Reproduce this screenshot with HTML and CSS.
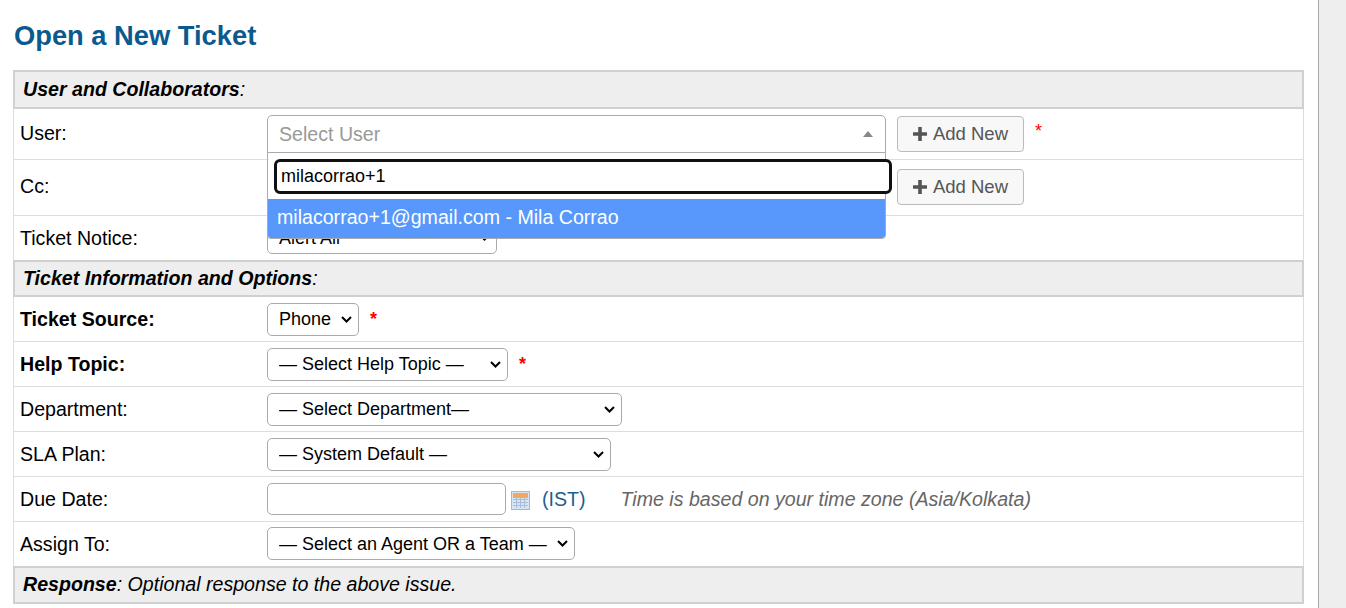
FILE: index.html
```html
<!DOCTYPE html>
<html lang="en">
<head>
<meta charset="utf-8">
<title>Open a New Ticket</title>
<link rel="stylesheet" href="styles.css">
</head>
<body>
<div class="page">
  <main class="content">
    <h1 class="title">Open a New Ticket</h1>
    <div class="form">
      <div class="section section-first"><b>User and Collaborators</b>:</div>
      <div class="row row-user">
        <label class="label">User:</label>
        <div class="field">
          <div class="combo">
            <div class="combo-box"><span class="combo-text">Select User</span><span class="combo-arrow"></span></div>
            <div class="combo-drop">
              <div class="combo-search"><input class="combo-input" type="text" value="milacorrao+1"></div>
              <div class="combo-result">milacorrao+1@gmail.com - Mila Corrao</div>
            </div>
          </div>
          <button class="add-btn" type="button"><svg class="plus" viewBox="0 0 14 14"><path d="M5.2 0h3.600v5.200H14v3.600H8.800V14H5.200V8.800H0V5.200h5.200z"/></svg>Add New</button>
          <span class="req req-user">*</span>
        </div>
      </div>
      <div class="row row-cc">
        <label class="label">Cc:</label>
        <div class="field">
          <div class="combo"></div>
          <button class="add-btn" type="button"><svg class="plus" viewBox="0 0 14 14"><path d="M5.2 0h3.600v5.200H14v3.600H8.800V14H5.200V8.800H0V5.200h5.200z"/></svg>Add New</button>
        </div>
      </div>
      <div class="row row-notice">
        <label class="label">Ticket Notice:</label>
        <div class="field"><select class="sel w-notice"><option>Alert All</option></select></div>
      </div>
      <div class="section"><b>Ticket Information and Options</b>:</div>
      <div class="row">
        <label class="label strong">Ticket Source:</label>
        <div class="field"><select class="sel w-source"><option>Phone</option></select><span class="req">*</span></div>
      </div>
      <div class="row">
        <label class="label strong">Help Topic:</label>
        <div class="field"><select class="sel w-topic"><option>— Select Help Topic —</option></select><span class="req">*</span></div>
      </div>
      <div class="row">
        <label class="label">Department:</label>
        <div class="field"><select class="sel w-dept"><option>— Select Department—</option></select></div>
      </div>
      <div class="row">
        <label class="label">SLA Plan:</label>
        <div class="field"><select class="sel w-sla"><option>— System Default —</option></select></div>
      </div>
      <div class="row">
        <label class="label">Due Date:</label>
        <div class="field">
          <input class="date" type="text">
          <svg class="cal" viewBox="0 0 19 19">
            <rect x="0.500" y="0.500" width="18" height="18" fill="#d6e4f4" stroke="#9dbbdd"/>
            <rect x="2" y="2" width="15" height="5" fill="#f3a860"/>
            <path d="M2 8.500h15M2 11.500h15M2 14.500h15M5.500 7v10M9.500 7v10M13.500 7v10" stroke="#a9bfd8" fill="none"/>
          </svg>
          <span class="tz">(IST)</span>
          <em class="note">Time is based on your time zone (Asia/Kolkata)</em>
        </div>
      </div>
      <div class="row row-assign">
        <label class="label">Assign To:</label>
        <div class="field"><select class="sel w-assign"><option>— Select an Agent OR a Team —</option></select></div>
      </div>
      <div class="section section-last"><b>Response</b>: Optional response to the above issue.</div>
    </div>
  </main>
  <aside class="side"></aside>
</div>
</body>
</html>
```
FILE: styles.css
```css
* { box-sizing: border-box; }
html, body { margin: 0; padding: 0; height: 100%; overflow: hidden; }
body { font-family: "Liberation Sans", Arial, sans-serif; font-size: 19.6px; color: #000; background: #fff; }
.page { display: flex; height: 608px; }
.content { width: 1318px; padding: 0 14px 0 13px; flex: none; }
.side { flex: 1; background: #eee; border-left: 1px solid #a8a8a8; }
.title { margin: 0; padding: 19px 0 0 1px; height: 70px; font-size: 27.3px; line-height: 33px; font-weight: bold; color: #0a5a8e; }
.form { border-left: 1px solid #ddd; border-right: 1px solid #ddd; }
.section { height: 37px; margin: 0 -1px; padding: 0 0 0 8px; background: #eee; border: 2px solid #d0d0d0; font-style: italic; line-height: 32px; }
.section-first { height: 39px; line-height: 35px; }
.section-last { height: 38px; line-height: 32px; }
.row { display: flex; align-items: center; height: 45px; border-bottom: 1px solid #ddd; }
.row:has(+ .section) { height: 44px; border-bottom: 0; }
.row-user { height: 51px; align-items: flex-start; }
.row-cc { height: 56px; align-items: flex-start; }
.label { width: 253px; flex: none; padding-left: 6px; line-height: 22px; }
.row-user .label { padding-top: 13px; }
.row-cc .label { padding-top: 15px; }
.strong { font-weight: bold; }
.field { display: flex; align-items: center; flex: 1; }
.row-user .field { padding-top: 6px; }
.row-cc .field { padding-top: 8px; }
.combo { width: 619px; position: relative; flex: none; height: 37px; }
.combo-box { display: flex; align-items: center; height: 38px; padding: 0 12px 0 11px; background: #fff; border: 1px solid #aaa; border-radius: 5px 5px 0 0; }
.combo-text { flex: 1; color: #999; }
.combo-arrow { width: 0; height: 0; border-left: 5px solid transparent; border-right: 5px solid transparent; border-bottom: 6px solid #888; }
.combo-drop { position: absolute; left: 0; right: 0; top: 37px; background: #fff; border: 1px solid #aaa; border-radius: 0 0 4px 4px; z-index: 5; }
.combo-search { padding: 6px 0 5px 6px; height: 46px; }
.combo-input { display: block; width: 618px; height: 35px; padding: 0 4px; border: 3px solid #101010; border-radius: 6px; font: 18px "Liberation Sans", Arial, sans-serif; color: #000; outline: 0; background: #fff; }
.combo-result { height: 39px; padding-left: 9px; line-height: 37px; background: #5897fb; color: #fff; border-radius: 0 0 3px 3px; }
.add-btn { display: flex; align-items: center; justify-content: center; width: 127px; height: 36px; margin-left: 11px; padding: 0; background: #f8f8f8; border: 1px solid #bbb; border-radius: 4px; font: 18.500px "Liberation Sans", Arial, sans-serif; color: #555; }
.plus { width: 14px; height: 14px; margin-right: 6px; fill: #555; }
.req { color: #f00; font-weight: bold; margin-left: 11px; font-size: 18px; position: relative; top: 0; }
.req-user { align-self: flex-start; font-weight: normal; top: 6px; }
.sel { appearance: none; height: 33px; padding: 0 24px 0 11px; border: 1px solid #aaa; border-radius: 5px; font: 18px "Liberation Sans", Arial, sans-serif; color: #000; background: #fff url("data:image/svg+xml,%3Csvg xmlns='http://www.w3.org/2000/svg' width='11' height='7'%3E%3Cpath d='M1 1l4.500 4.500L10 1' fill='none' stroke='%23000' stroke-width='2'/%3E%3C/svg%3E") no-repeat right 6px center; }
.w-notice { width: 230px; }
.w-source { width: 92px; }
.w-topic { width: 241px; }
.w-dept { width: 355px; }
.w-sla { width: 344px; }
.w-assign { width: 308px; }
.row-notice .sel, .row-assign .sel { margin-top: -1px; }
.date { width: 239px; height: 32px; border: 1px solid #aaa; border-radius: 5px; background: #fff; }
.cal { width: 19px; height: 19px; margin: 2px 0 0 5px; flex: none; }
.tz { margin-left: 12px; color: #1f5f8b; }
.note { margin-left: 35px; color: #666; }
```
